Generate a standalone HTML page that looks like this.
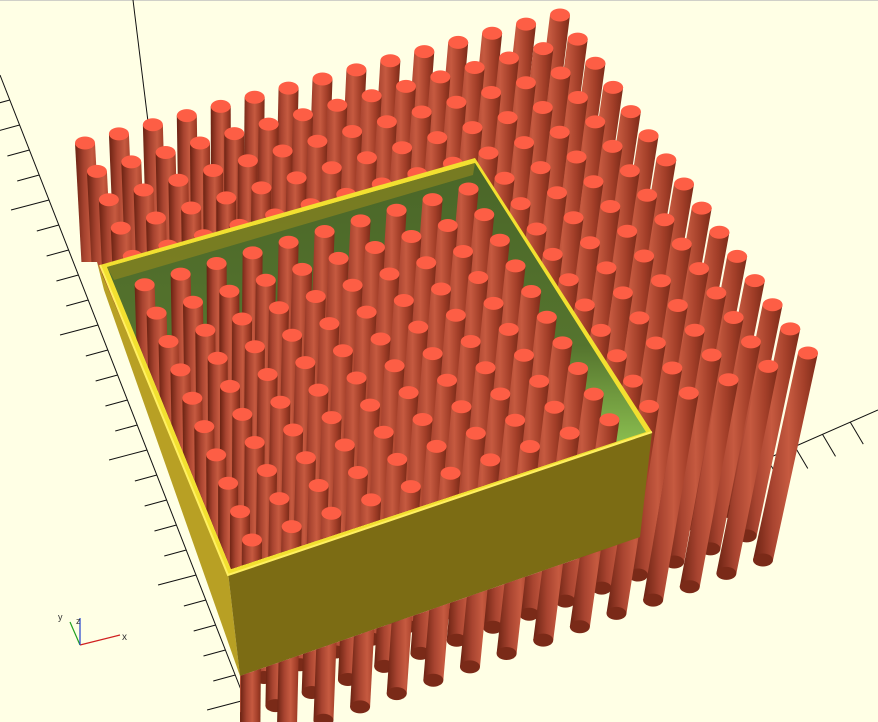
<!DOCTYPE html>
<html><head><meta charset="utf-8">
<style>
html,body{margin:0;padding:0;background:#ffffe5;overflow:hidden}
svg{display:block}
</style></head>
<body>
<svg id="s" width="878" height="722" viewBox="0 0 878 722" xmlns="http://www.w3.org/2000/svg">
<defs>
<linearGradient id="pg" x1="0" y1="0" x2="1" y2="0">
<stop offset="0" stop-color="#6a2212"/>
<stop offset="0.3" stop-color="#a84430"/>
<stop offset="0.55" stop-color="#c65a40"/>
<stop offset="0.8" stop-color="#a23e28"/>
<stop offset="1" stop-color="#7a2a18"/>
</linearGradient>
<linearGradient id="ig" x1="0" y1="0" x2="0" y2="1">
<stop offset="0" stop-color="#4a6628"/>
<stop offset="0.45" stop-color="#55742e"/>
<stop offset="0.7" stop-color="#8cc050"/>
<stop offset="1" stop-color="#96cc58"/>
</linearGradient>
<clipPath id="cin">
<polygon points="475,163 107,267 231,569 646,432"/>
<polygon points="240,676 640,537 878,537 878,722 240,722"/>
</clipPath>
</defs>
<rect width="878" height="722" fill="#ffffe5"/>
<line x1="0" y1="0.5" x2="878" y2="0.5" stroke="#d0d0c8"/>
<g id="axes" stroke="#111" stroke-width="1" fill="none">
<line x1="133" y1="0" x2="170" y2="300"/>
<line x1="240" y1="690" x2="878" y2="410"/>
</g>
<g id="back"></g>
<polygon points="0,262 97,262 240,676 240,722 0,722" fill="#ffffe5"/>
<g id="axl" stroke="#111" stroke-width="1" fill="none">
<line x1="0" y1="75" x2="245" y2="700"/>
</g>
<g id="box">
<polygon points="97,262 228,572 240,676 104,290" fill="#b8a024"/>
<polygon points="228,572 652,432 640,537 240,676" fill="#7c6c14"/>
<polygon points="475,158 100,265 228,575 652,432" fill="#f2e030"/>
<polygon points="475,163 107,267 231,569 646,432" fill="url(#ig)"/>
<polygon points="475,163 107,267 114,280 473,175" fill="#8a8420" opacity="0.7"/>
<polyline points="100,265 228,575 652,432" fill="none" stroke="#fff060" stroke-width="2"/>
</g>
<g id="front" clip-path="url(#cin)"></g>
<g stroke-width="1.2" fill="none">
<line x1="80" y1="645" x2="120" y2="635" stroke="#d02020"/>
<line x1="80" y1="645" x2="70" y2="622" stroke="#20a020"/>
<line x1="80" y1="645" x2="80" y2="618" stroke="#2040d0"/>
</g>
<text x="122" y="640" font-family="Liberation Sans, sans-serif" font-size="10" fill="#333">x</text>
<text x="58" y="620" font-family="Liberation Sans, sans-serif" font-size="9" fill="#333">y</text>
<text x="76" y="624" font-family="Liberation Sans, sans-serif" font-size="9" fill="#333">z</text>
</svg>
<script>
(function(){
var NS="http://www.w3.org/2000/svg";
var ax=document.getElementById('axes'),h='',h2='';
for(var k=0;k<24;k++){var t=k/23;var x=240+638*t,y=690-280*t;if(x>640&&x<878||x<250)h+='<line x1="'+x+'" y1="'+y+'" x2="'+(x+13)+'" y2="'+(y+22)+'"/>';}
for(var k=1;k<26;k++){var y=75+k*25,x=(y-75)/2.55;var ln=(k%5?22:38);if(y<265)h+='<line x1="'+x+'" y1="'+y+'" x2="'+(x-ln)+'" y2="'+(y+(k%5?6:10))+'"/>';else h2+='<line x1="'+x+'" y1="'+y+'" x2="'+(x-ln)+'" y2="'+(y+(k%5?6:10))+'"/>';}
ax.innerHTML+=h;
document.getElementById('axl').innerHTML+=h2;
var B=[560,15],L=[85,143],R=[808,353],F=[252,540];
function lerp(a,b,t){return [a[0]+(b[0]-a[0])*t,a[1]+(b[1]-a[1])*t];}
var poly=[[475,160],[104,266],[230,570],[648,432]];
function inside(p){var c=false;for(var i=0,j=3;i<4;j=i++){var a=poly[i],b=poly[j];if(((a[1]>p[1])!=(b[1]>p[1]))&&(p[0]<(b[0]-a[0])*(p[1]-a[1])/(b[1]-a[1])+a[0]))c=!c;}return c;}
var pins=[];
for(var i=0;i<15;i++)for(var j=0;j<15;j++){
 var u=i/14,v=j/14;
 pins.push(lerp(lerp(B,L,u),lerp(R,F,u),v));
}
pins.sort(function(a,b){return a[1]-b[1];});
var back=document.getElementById('back'),front=document.getElementById('front');
pins.forEach(function(p){
 var x=p[0],y=p[1],r=10,ry=6.5;
 var dx=10-55*(x-100)/708,dy=207;
 var bx=x+dx,by=y+dy;
 var g=document.createElementNS(NS,'g');
 g.innerHTML='<polygon points="'+(x-r)+','+y+' '+(x+r)+','+y+' '+(bx+r)+','+by+' '+(bx-r)+','+by+'" fill="url(#pg)"/>'+
 '<ellipse cx="'+bx+'" cy="'+by+'" rx="'+r+'" ry="'+ry+'" fill="#7a2a18"/>'+
 '<ellipse cx="'+x+'" cy="'+y+'" rx="'+r+'" ry="'+ry+'" fill="#fd5e45"/>';
 (inside(p)?front:back).appendChild(g);
});
})();
</script>
</body></html>
